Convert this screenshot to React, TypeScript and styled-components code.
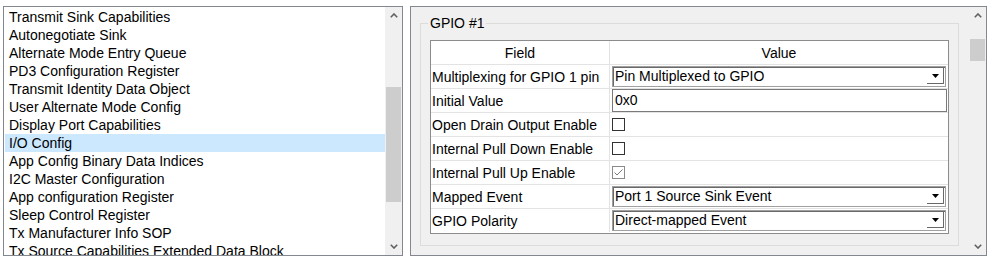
import React from "react";
import styled, { createGlobalStyle } from "styled-components";

const GlobalStyle = createGlobalStyle`
  html, body { margin: 0; padding: 0; background: #ffffff; }
  body {
    font-family: "Liberation Sans", Arial, sans-serif;
    font-size: 14px;
    color: #000000;
  }
  * { box-sizing: border-box; }
`;

const Page = styled.div`
  display: flex;
  align-items: flex-start;
  gap: 7px;
  padding: 6px 0 0 3px;
`;

const ListPanel = styled.div`
  width: 400px;
  height: 250px;
  border: 1px solid #828790;
  background: #ffffff;
  display: flex;
  overflow: hidden;
`;

const ListBody = styled.div`
  flex: 1;
  padding: 1px 0 0 1px;
  overflow: hidden;
  display: flex;
  flex-direction: column;
`;

const ListRow = styled.div<{ $selected?: boolean }>`
  flex: none;
  height: 18px;
  line-height: 18px;
  padding-left: 4px;
  white-space: nowrap;
  background: ${(p) => (p.$selected ? "#cce8ff" : "transparent")};
`;

const ScrollBar = styled.div`
  width: 17px;
  flex: none;
  background: #f0f0f0;
  display: flex;
  flex-direction: column;
`;

const ArrowButton = styled.div`
  height: 17px;
  flex: none;
  display: flex;
  align-items: center;
  justify-content: center;
`;

const Track = styled.div`
  flex: 1;
  display: flex;
  flex-direction: column;
`;

const Thumb = styled.div<{ $top: number; $height: number }>`
  margin: ${(p) => p.$top}px 1px 0 1px;
  height: ${(p) => p.$height}px;
  background: #cdcdcd;
`;

const RightPanel = styled.div`
  width: 577px;
  height: 250px;
  border: 1px solid #828790;
  background: #f0f0f0;
  display: flex;
  overflow: hidden;
`;

const RightContent = styled.div`
  flex: 1;
  padding: 0 10px 0 9px;
  overflow: hidden;
`;

const GroupBox = styled.fieldset`
  margin: 8px 0 0 0;
  padding: 9px 9px 11px 9px;
  border: 1px solid #dcdcdc;
  min-width: 0;
`;

const GroupLegend = styled.legend`
  margin-left: -2px;
  padding: 0 2px;
  line-height: 16px;
  font-size: 14px;
`;

const Table = styled.div`
  display: grid;
  grid-template-columns: 179px 1fr;
  grid-auto-rows: 24px;
  border: 1px solid #8c8c8c;
  background: #ffffff;
`;

const Cell = styled.div<{ $first?: boolean; $last?: boolean; $center?: boolean }>`
  border-bottom: ${(p) => (p.$last ? "none" : "1px solid #e3e3e3")};
  border-right: ${(p) => (p.$first ? "1px solid #e3e3e3" : "none")};
  display: flex;
  align-items: center;
  justify-content: ${(p) => (p.$center ? "center" : "flex-start")};
  padding-left: ${(p) => (p.$center ? "0" : "1px")};
  white-space: nowrap;
  overflow: hidden;
  height: ${(p) => (p.$last ? "23px" : "24px")};
`;

const Combo = styled.div`
  flex: 1;
  margin: 0 2px 0 1px;
  height: 21px;
  border: 1px solid #a0a0a0;
  box-shadow: inset 1px 1px 0 #696969;
  background: #ffffff;
  display: flex;
  align-items: flex-start;
`;

const ComboText = styled.span`
  flex: 1;
  padding-left: 2px;
  line-height: 19px;
`;

const ComboButton = styled.div`
  width: 17px;
  height: 16px;
  margin: 1px 1px 0 0;
  border-right: 1px solid #696969;
  border-bottom: 1px solid #696969;
  display: flex;
  align-items: center;
  justify-content: center;
`;

const TextBox = styled.div`
  flex: 1;
  margin: 0 1px 0 1px;
  height: 23px;
  border: 1px solid #7a7a7a;
  background: #ffffff;
  padding-left: 2px;
  line-height: 21px;
`;

const CheckBox = styled.div<{ $checked?: boolean }>`
  width: 13px;
  height: 13px;
  margin-left: 1px;
  border: 1px solid ${(p) => (p.$checked ? "#8a8a8a" : "#333333")};
  background: #ffffff;
  display: flex;
  align-items: center;
  justify-content: center;
`;

const Chevron = ({ up }: { up?: boolean }) => (
  <svg width="8" height="5" viewBox="0 0 8 5">
    <polyline
      points={up ? "0.8,4.2 4,1 7.2,4.2" : "0.8,0.8 4,4 7.2,0.8"}
      fill="none"
      stroke="#606060"
      strokeWidth="1.6"
    />
  </svg>
);

const DropTriangle = () => (
  <svg width="7" height="4" viewBox="0 0 7 4">
    <polygon points="0,0 7,0 3.5,4" fill="#000000" />
  </svg>
);

const CheckMark = () => (
  <svg width="9" height="7" viewBox="0 0 9 7">
    <polyline points="0.5,3.5 3,6 8.5,0.5" fill="none" stroke="#7a7a7a" strokeWidth="1" />
  </svg>
);

const VScroll = ({ top, height }: { top: number; height: number }) => (
  <ScrollBar>
    <ArrowButton>
      <Chevron up />
    </ArrowButton>
    <Track>
      <Thumb $top={top} $height={height} />
    </Track>
    <ArrowButton>
      <Chevron />
    </ArrowButton>
  </ScrollBar>
);

const listItems = [
  "Transmit Sink Capabilities",
  "Autonegotiate Sink",
  "Alternate Mode Entry Queue",
  "PD3 Configuration Register",
  "Transmit Identity Data Object",
  "User Alternate Mode Config",
  "Display Port Capabilities",
  "I/O Config",
  "App Config Binary Data Indices",
  "I2C Master Configuration",
  "App configuration Register",
  "Sleep Control Register",
  "Tx Manufacturer Info SOP",
  "Tx Source Capabilities Extended Data Block",
];

type Field =
  | { label: string; kind: "select"; value: string }
  | { label: string; kind: "input"; value: string }
  | { label: string; kind: "check"; checked: boolean };

const fields: Field[] = [
  { label: "Multiplexing for GPIO 1 pin", kind: "select", value: "Pin Multiplexed to GPIO" },
  { label: "Initial Value", kind: "input", value: "0x0" },
  { label: "Open Drain Output Enable", kind: "check", checked: false },
  { label: "Internal Pull Down Enable", kind: "check", checked: false },
  { label: "Internal Pull Up Enable", kind: "check", checked: true },
  { label: "Mapped Event", kind: "select", value: "Port 1 Source Sink Event" },
  { label: "GPIO Polarity", kind: "select", value: "Direct-mapped Event" },
];

const renderValue = (f: Field) => {
  if (f.kind === "select") {
    return (
      <Combo>
        <ComboText>{f.value}</ComboText>
        <ComboButton>
          <DropTriangle />
        </ComboButton>
      </Combo>
    );
  }
  if (f.kind === "input") {
    return <TextBox>{f.value}</TextBox>;
  }
  return <CheckBox $checked={f.checked}>{f.checked && <CheckMark />}</CheckBox>;
};

export default function App() {
  return (
    <>
      <GlobalStyle />
      <Page>
        <ListPanel>
          <ListBody>
            {listItems.map((item) => (
              <ListRow key={item} $selected={item === "I/O Config"}>
                {item}
              </ListRow>
            ))}
          </ListBody>
          <VScroll top={63} height={115} />
        </ListPanel>
        <RightPanel>
          <RightContent>
            <GroupBox>
              <GroupLegend>GPIO #1</GroupLegend>
              <Table>
                <Cell $first $center>Field</Cell>
                <Cell $center>Value</Cell>
                {fields.map((f, i) => {
                  const last = i === fields.length - 1;
                  return (
                    <React.Fragment key={f.label}>
                      <Cell $first $last={last}>{f.label}</Cell>
                      <Cell $last={last}>{renderValue(f)}</Cell>
                    </React.Fragment>
                  );
                })}
              </Table>
            </GroupBox>
          </RightContent>
          <VScroll top={15} height={22} />
        </RightPanel>
      </Page>
    </>
  );
}
